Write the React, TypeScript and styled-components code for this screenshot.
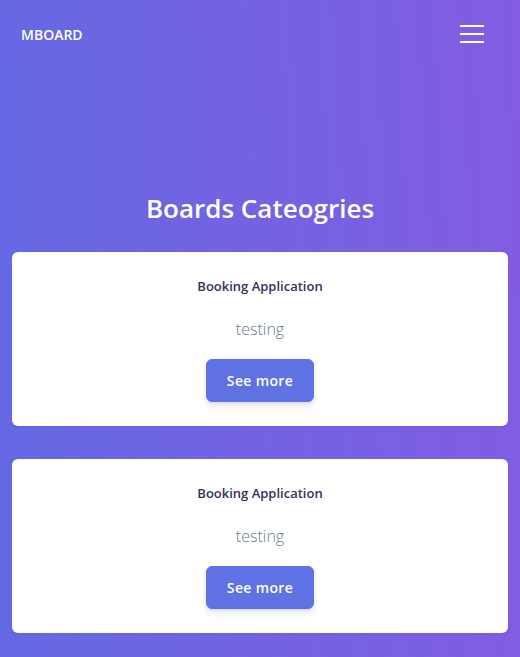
import styled, { createGlobalStyle } from "styled-components";

const GlobalStyle = createGlobalStyle`
  * {
    box-sizing: border-box;
  }

  html, body {
    margin: 0;
    padding: 0;
  }

  body {
    font-family: "Open Sans", "Liberation Sans", sans-serif;
    background: linear-gradient(87deg, #6569e3 0%, #825ce2 100%);
    background-attachment: fixed;
    min-height: 100vh;
  }
`;

const Page = styled.div`
  min-height: 100vh;
  padding: 0 12px 24px;
`;

const Navbar = styled.nav`
  height: 68px;
  display: flex;
  align-items: center;
  justify-content: space-between;
  padding: 0 24px 0 9px;
`;

const Brand = styled.a`
  color: #fff;
  font-size: 14px;
  font-weight: 600;
  text-decoration: none;
`;

const Toggler = styled.button`
  width: 24px;
  height: 18px;
  padding: 0;
  border: none;
  background: transparent;
  display: flex;
  flex-direction: column;
  justify-content: space-between;
  cursor: pointer;

  span {
    display: block;
    height: 2px;
    width: 100%;
    background: #fff;
  }
`;

const Title = styled.h2`
  margin: 124px 0 26px;
  text-align: center;
  color: #fff;
  font-size: 26px;
  font-weight: 600;
  line-height: 1.3;
`;

const List = styled.div`
  display: flex;
  flex-direction: column;
  gap: 33px;
`;

const Card = styled.div`
  background: #fff;
  border-radius: 6px;
  padding: 24px;
  text-align: center;
  box-shadow: 0 1px 3px rgba(50, 50, 93, 0.08);
`;

const CardTitle = styled.h6`
  margin: 0;
  color: #32325d;
  font-size: 13px;
  font-weight: 600;
  line-height: 20px;
`;

const CardText = styled.p`
  margin: 21px 0 18px;
  color: #6b7a99;
  font-size: 16px;
  font-weight: 300;
  line-height: 24px;
`;

const Button = styled.button`
  font-family: inherit;
  background: #5e72e4;
  border: 1px solid #5e72e4;
  color: #fff;
  font-size: 14px;
  font-weight: 600;
  letter-spacing: 0.025em;
  line-height: 1.5;
  padding: 10px 20px;
  border-radius: 6px;
  box-shadow: 0 4px 6px rgba(50, 50, 93, 0.11), 0 1px 3px rgba(0, 0, 0, 0.08);
  cursor: pointer;
`;

const boards = [
  { id: 1, name: "Booking Application", description: "testing" },
  { id: 2, name: "Booking Application", description: "testing" },
];

export default function App() {
  return (
    <>
      <GlobalStyle />
      <Page>
        <Navbar>
          <Brand href="#">MBOARD</Brand>
          <Toggler aria-label="Toggle navigation">
            <span />
            <span />
            <span />
          </Toggler>
        </Navbar>
        <Title>Boards Cateogries</Title>
        <List>
          {boards.map((b) => (
            <Card key={b.id}>
              <CardTitle>{b.name}</CardTitle>
              <CardText>{b.description}</CardText>
              <Button>See more</Button>
            </Card>
          ))}
        </List>
      </Page>
    </>
  );
}
